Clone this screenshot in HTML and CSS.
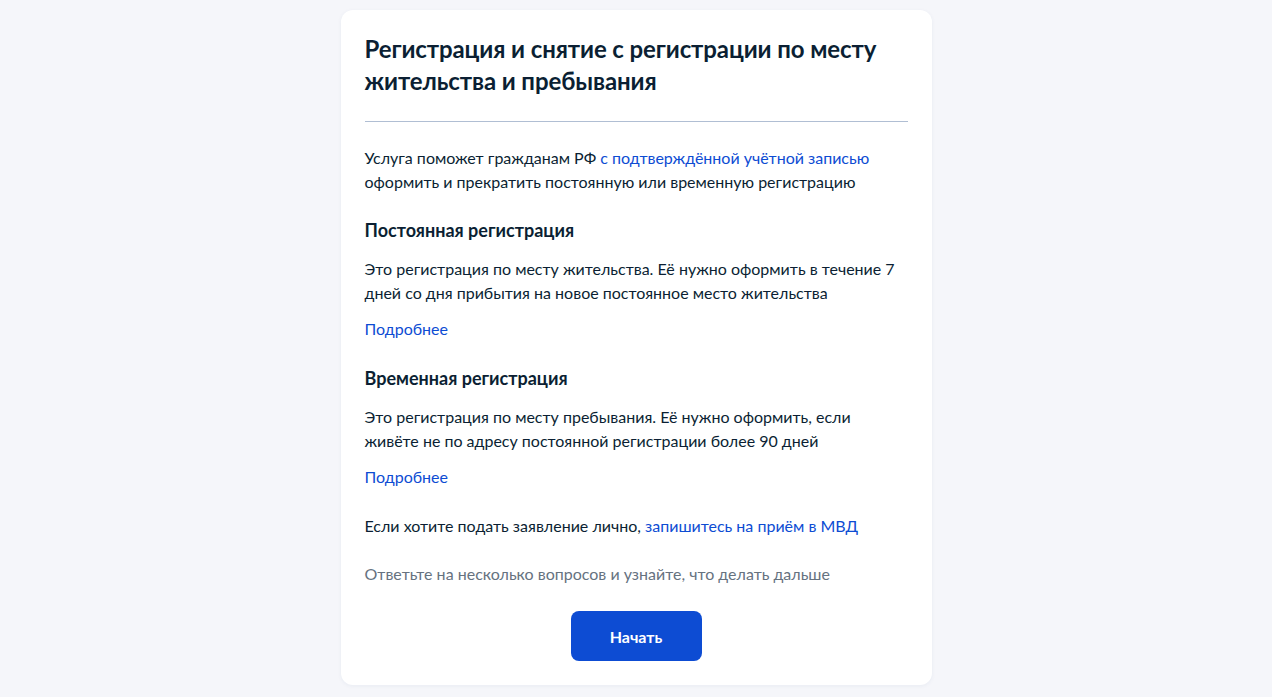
FILE: index.html
```html
<!doctype html>
<html lang="ru">
<head>
<meta charset="utf-8">
<title>Регистрация по месту жительства</title>
<link rel="stylesheet" href="styles.css">
</head>
<body>
<div class="card">
  <h1 class="title">Регистрация и снятие с регистрации по месту жительства и пребывания</h1>
  <div class="divider"></div>

  <p class="text">Услуга поможет гражданам РФ <a href="#">с подтверждённой учётной записью</a> оформить и прекратить постоянную или временную регистрацию</p>

  <h2 class="subtitle">Постоянная регистрация</h2>
  <p class="text tight">Это регистрация по месту жительства. Её нужно оформить в течение 7 дней со дня прибытия на новое постоянное место жительства</p>
  <a class="more" href="#">Подробнее</a>

  <h2 class="subtitle">Временная регистрация</h2>
  <p class="text tight">Это регистрация по месту пребывания. Её нужно оформить, если живёте не по адресу постоянной регистрации более 90 дней</p>
  <a class="more" href="#">Подробнее</a>

  <p class="text">Если хотите подать заявление лично, <a href="#">запишитесь на приём в МВД</a></p>
  <p class="text muted">Ответьте на несколько вопросов и узнайте, что делать дальше</p>

  <div class="actions">
    <button class="start">Начать</button>
  </div>
</div>
</body>
</html>
```

FILE: styles.css
```css
body {
    margin: 0;
    background: #f5f6fa;
    font-family: Lato, "Noto Sans", sans-serif;
    color: #0b1f33;
}
a {
    color: #0d4cd3;
    text-decoration: none;
}
.card {
    width: 543px;
    margin: 10px auto 11px;
    padding: 23px 24px 24px;
    background: #ffffff;
    border-radius: 12px;
    box-shadow: 0 1px 4px rgba(30, 60, 120, 0.06);
}
.title {
    margin: 0;
    font-size: 24px;
    line-height: 32px;
    font-weight: 700;
    letter-spacing: -0.1px;
}
.divider {
    height: 1px;
    margin: 24px 0;
    background: #b0bed3;
}
.text {
    margin: 0 0 24px;
    font-size: 16px;
    line-height: 24px;
}
.text.tight {
    margin-bottom: 12px;
}
.muted {
    color: #66727f;
}
.subtitle {
    margin: 0 0 15px;
    font-size: 18px;
    line-height: 24px;
    font-weight: 700;
}
.more {
    display: block;
    margin-bottom: 25px;
    font-size: 16px;
    line-height: 24px;
}
.actions {
    display: flex;
    justify-content: center;
    padding-top: 1px;
}
.start {
    width: 131px;
    height: 50px;
    border: 0;
    border-radius: 8px;
    background: #0d4cd3;
    color: #ffffff;
    font-family: Lato, "Noto Sans", sans-serif;
    font-size: 16px;
    font-weight: 700;
}
```
